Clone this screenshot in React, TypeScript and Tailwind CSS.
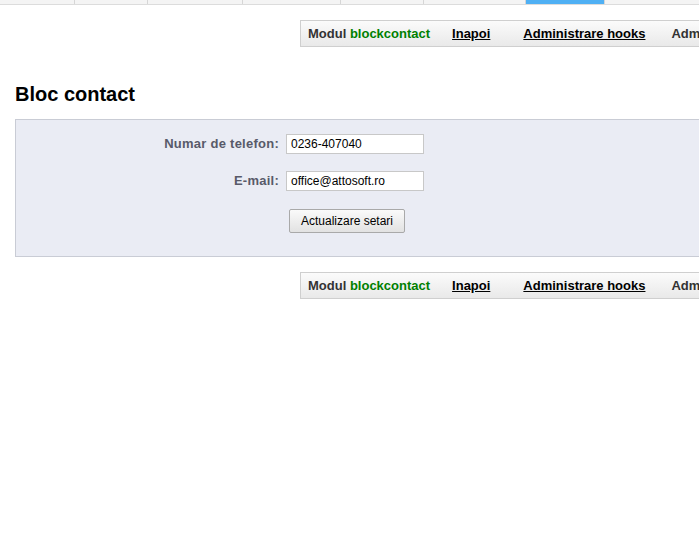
import React from 'react';

const tabs = [75, 73, 95, 98, 83, 102];

function Toolbar() {
    return (
        <div className="ml-[300px] flex h-[27px] w-[520px] shrink-0 items-center whitespace-nowrap border border-[#cfcfcf] bg-gradient-to-b from-[#fbfbfb] to-[#e9e9e9] pl-[7px] text-[13px] font-bold">
            <span className="text-[#333]">
                Modul <span className="text-[#008000]">blockcontact</span>
            </span>
            <a href="#" className="ml-[22px] text-black underline">Inapoi</a>
            <a href="#" className="ml-[33px] text-black underline">Administrare hooks</a>
            <span className="ml-[26px] text-[#333]">Administrare module</span>
        </div>
    );
}

export default function App() {
    return (
        <div className="h-[536px] w-[699px] overflow-hidden bg-white font-['Liberation_Sans',Arial,sans-serif]">
            {/* Tabs */}
            <div className="flex h-[5px] border-b border-[#dcdcdc] bg-[#f4f4f4]">
                {tabs.map((w, i) => (
                    <div key={i} style={{ width: w }} className="shrink-0 border-r border-[#d6d6d6]" />
                ))}
                <div className="w-[78px] shrink-0 bg-[#4fb0f4]" />
                <div className="flex-1 border-l border-[#d6d6d6]" />
            </div>

            <div className="mt-[15px] flex">
                <Toolbar />
            </div>

            <h2 className="ml-[15px] mt-[35px] text-[20px] font-bold leading-[24px] text-black">Bloc contact</h2>

            <div className="ml-[15px] mt-[13px] w-[720px] border border-[#c9ccd5] bg-[#eaecf4] pb-[23px] pt-[14px]">
                <div className="grid grid-cols-[263px_auto] items-center gap-x-[7px] gap-y-[17px]">
                    <label className="text-right text-[13px] font-bold tracking-[0.25px] text-[#585a69]">Numar de telefon:</label>
                    <input
                        defaultValue="0236-407040"
                        className="h-[20px] w-[138px] border border-[#c8c8c8] bg-white px-[4px] text-[12px] text-black outline-none"
                    />
                    <label className="text-right text-[13px] font-bold tracking-[0.25px] text-[#585a69]">E-mail:</label>
                    <input
                        defaultValue="office@attosoft.ro"
                        className="h-[20px] w-[138px] border border-[#c8c8c8] bg-white px-[4px] text-[12px] text-black outline-none"
                    />
                    <div />
                    <div>
                        <button className="ml-[3px] h-[24px] w-[116px] rounded-[2px] border border-[#a9a9a9] bg-gradient-to-b from-[#fafafa] to-[#e2e2e2] text-[12px] text-black">
                            Actualizare setari
                        </button>
                    </div>
                </div>
            </div>

            <div className="mt-[15px] flex">
                <Toolbar />
            </div>
        </div>
    );
}
